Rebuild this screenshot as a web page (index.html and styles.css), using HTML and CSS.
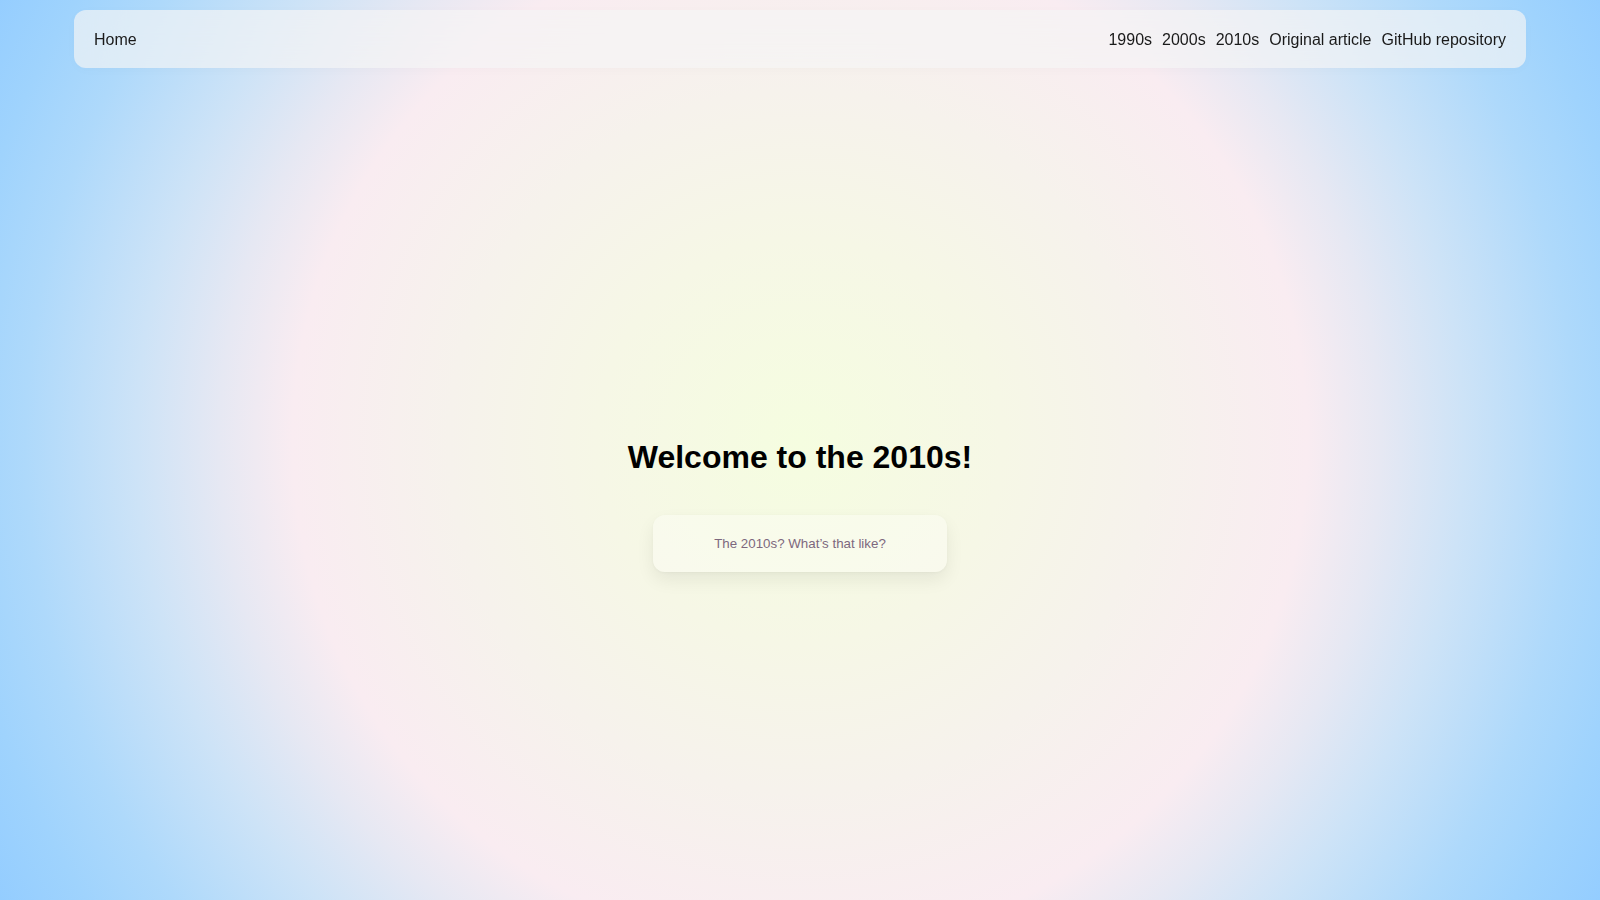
FILE: index.html
```html
<!DOCTYPE html>
<html lang="en">
<head>
<meta charset="utf-8">
<title>Welcome to the 2010s!</title>
<link rel="stylesheet" href="styles.css">
</head>
<body>
<nav class="topnav">
  <a class="nav-link" href="#">Home</a>
  <div class="nav-right">
    <a class="nav-link" href="#">1990s</a>
    <a class="nav-link" href="#">2000s</a>
    <a class="nav-link" href="#">2010s</a>
    <a class="nav-link" href="#">Original article</a>
    <a class="nav-link" href="#">GitHub repository</a>
  </div>
</nav>
<main class="hero">
  <h1 class="hero-title">Welcome to the 2010s!</h1>
  <button class="hero-button" type="button">The 2010s? What’s that like?</button>
</main>
</body>
</html>
```

FILE: styles.css
```css
html, body {
  margin: 0;
  padding: 0;
  height: 100%;
}

body {
  font-family: "Liberation Sans", Arial, Helvetica, sans-serif;
  color: #111;
  overflow: hidden;
  background: radial-gradient(circle farthest-corner at 50% 49%,
    #f5fde0 0%,
    #f6f7e6 22%,
    #f6f2ec 38%,
    #f9ecf1 55%,
    #e6e8f3 63%,
    #cde3f7 72%,
    #aed9fb 84%,
    #9fd3fd 92%,
    #94cdff 100%);
}

.topnav {
  margin: 10px 74px 0;
  height: 58px;
  box-sizing: border-box;
  padding: 1px 20px 0;
  display: flex;
  align-items: center;
  justify-content: space-between;
  border-radius: 12px;
  background: rgba(244, 244, 244, 0.68);
  backdrop-filter: blur(24px);
  box-shadow: 0 2px 12px rgba(0, 0, 0, 0.02);
}

.nav-right {
  display: flex;
  gap: 10px;
}

.nav-link {
  font-size: 16px;
  color: #1a1a1a;
  text-decoration: none;
}

.hero {
  display: flex;
  flex-direction: column;
  align-items: center;
  padding-top: 371px;
}

.hero-title {
  margin: 0 0 39px;
  font-size: 32px;
  font-weight: 700;
  color: #000;
}

.hero-button {
  font-family: "Liberation Sans", Arial, Helvetica, sans-serif;
  font-size: 13.333px;
  color: #7d687e;
  padding: 21px 61px;
  border: none;
  border-radius: 12px;
  background: rgba(255, 255, 255, 0.3);
  box-shadow: 0 8px 18px rgba(0, 0, 0, 0.07), 0 1px 3px rgba(0, 0, 0, 0.03);
  cursor: pointer;
}
```
